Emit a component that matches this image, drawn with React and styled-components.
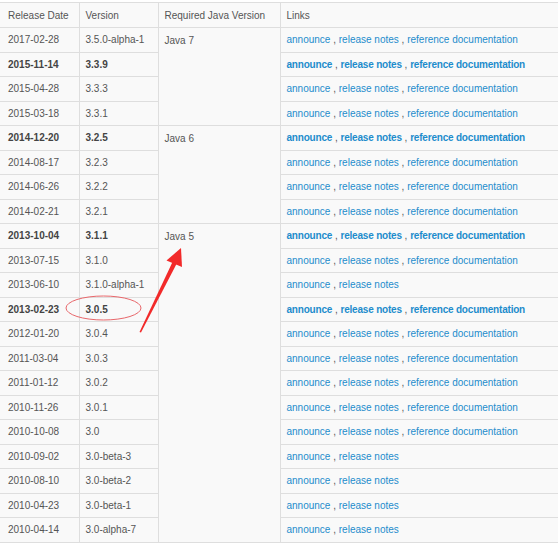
import React from 'react';
import styled, { createGlobalStyle } from 'styled-components';

const GlobalStyle = createGlobalStyle`
    html, body {
        margin: 0;
        padding: 0;
        background: #fff;
        overflow: hidden;
    }
    body {
        font-family: "Liberation Sans", Arial, sans-serif;
    }
`;

const Page = styled.div`
    position: relative;
    width: 558px;
    height: 544px;
    overflow: hidden;
    padding-top: 2px;
    box-sizing: border-box;
`;

const Table = styled.table`
    border-collapse: collapse;
    table-layout: fixed;
    width: 600px;
    background: #f9f9f9;
    font-size: 10px;
    color: #555;
`;

const Col = styled.col`
    width: ${(p) => p.$w}px;
`;

const HeadRow = styled.tr`
    height: 25px;
`;

const Row = styled.tr`
    height: 24.5px;
`;

const Th = styled.th`
    border: 1px solid #dedede;
    border-left: ${(p) => (p.$first ? 'none' : '1px solid #dedede')};
    padding: 0 7px 0 ${(p) => (p.$first ? 8 : 6)}px;
    text-align: left;
    font-weight: normal;
    color: #555;
    white-space: nowrap;
`;

const Td = styled.td`
    border: 1px solid #dedede;
    border-left: ${(p) => (p.$first ? 'none' : '1px solid #dedede')};
    padding: 0 7px 0 ${(p) => (p.$first ? 8 : 6)}px;
    font-weight: ${(p) => (p.$bold ? 'bold' : 'normal')};
    color: ${(p) => (p.$bold ? '#444' : '#555')};
    white-space: nowrap;
`;

const JavaCell = styled.td`
    border: 1px solid #dedede;
    padding: 7px 7px 0 6px;
    vertical-align: top;
    color: #555;
`;

const Link = styled.a`
    color: #1d8ccc;
    text-decoration: none;
    font-weight: ${(p) => (p.$bold ? 'bold' : 'normal')};
    letter-spacing: ${(p) => (p.$bold ? '-0.2px' : '0')};
`;

const Sep = styled.span`
    color: #555;
`;

const Overlay = styled.svg`
    position: absolute;
    left: 0;
    top: 0;
    pointer-events: none;
`;

const rows = [
    { date: '2017-02-28', version: '3.5.0-alpha-1', docs: true, java: 'Java 7', span: 4 },
    { date: '2015-11-14', version: '3.3.9', docs: true, bold: true },
    { date: '2015-04-28', version: '3.3.3', docs: true },
    { date: '2015-03-18', version: '3.3.1', docs: true },
    { date: '2014-12-20', version: '3.2.5', docs: true, bold: true, java: 'Java 6', span: 4 },
    { date: '2014-08-17', version: '3.2.3', docs: true },
    { date: '2014-06-26', version: '3.2.2', docs: true },
    { date: '2014-02-21', version: '3.2.1', docs: true },
    { date: '2013-10-04', version: '3.1.1', docs: true, bold: true, java: 'Java 5', span: 13 },
    { date: '2013-07-15', version: '3.1.0', docs: true },
    { date: '2013-06-10', version: '3.1.0-alpha-1', docs: false },
    { date: '2013-02-23', version: '3.0.5', docs: true, bold: true },
    { date: '2012-01-20', version: '3.0.4', docs: true },
    { date: '2011-03-04', version: '3.0.3', docs: true },
    { date: '2011-01-12', version: '3.0.2', docs: true },
    { date: '2010-11-26', version: '3.0.1', docs: true },
    { date: '2010-10-08', version: '3.0', docs: true },
    { date: '2010-09-02', version: '3.0-beta-3', docs: false },
    { date: '2010-08-10', version: '3.0-beta-2', docs: false },
    { date: '2010-04-23', version: '3.0-beta-1', docs: false },
    { date: '2010-04-14', version: '3.0-alpha-7', docs: false },
];

const Links = ({ bold, docs }) => (
    <>
        <Link $bold={bold} href="#">announce</Link>
        <Sep> , </Sep>
        <Link $bold={bold} href="#">release notes</Link>
        {docs && (
            <>
                <Sep> , </Sep>
                <Link $bold={bold} href="#">reference documentation</Link>
            </>
        )}
    </>
);

const App = () => {
    return (
        <Page>
            <GlobalStyle />
            <Table>
                <colgroup>
                    <Col $w={79} />
                    <Col $w={79} />
                    <Col $w={122} />
                    <Col $w={320} />
                </colgroup>
                <thead>
                    <HeadRow>
                        <Th $first>Release Date</Th>
                        <Th>Version</Th>
                        <Th>Required Java Version</Th>
                        <Th>Links</Th>
                    </HeadRow>
                </thead>
                <tbody>
                    {rows.map((r) => (
                        <Row key={r.date}>
                            <Td $first $bold={r.bold}>{r.date}</Td>
                            <Td $bold={r.bold}>{r.version}</Td>
                            {r.java && <JavaCell rowSpan={r.span}>{r.java}</JavaCell>}
                            <Td>
                                <Links bold={r.bold} docs={r.docs} />
                            </Td>
                        </Row>
                    ))}
                </tbody>
            </Table>
            {/* annotation drawn over the screenshot */}
            <Overlay width="558" height="544" viewBox="0 0 558 544">
                <ellipse cx="103.5" cy="308" rx="37.5" ry="12" fill="none" stroke="#e8676b" strokeWidth="1" />
                <polygon points="139.5,332 141,332.5 176.5,264 172.5,262" fill="#f22a2a" />
                <polygon points="181,248 166.5,260.5 182,267" fill="#f22a2a" />
            </Overlay>
        </Page>
    );
};

export default App;
